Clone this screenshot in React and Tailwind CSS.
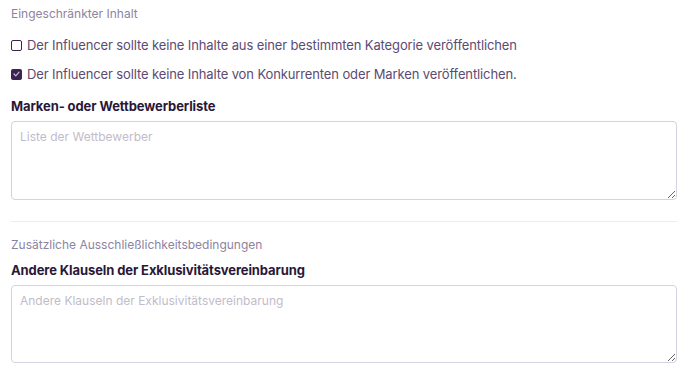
export default function App() {
  return (
    <div className="bg-white w-[688px] h-[374px] px-[11px] pt-[6px] font-['Inter',sans-serif] text-[#5b4b73]">
      <p className="text-[12px] leading-[16px] text-[#8d83a0]">Eingeschränkter Inhalt</p>

      <label className="mt-[14px] flex items-center gap-[5px] text-[13px] leading-[18px] tracking-[-0.12px]">
        <span className="w-[11px] h-[11px] rounded-[2px] border-[1.5px] border-[#3b2451] bg-white shrink-0" />
        <span>Der Influencer sollte keine Inhalte aus einer bestimmten Kategorie veröffentlichen</span>
      </label>

      <label className="mt-[11px] flex items-center gap-[5px] text-[13px] leading-[18px] tracking-[-0.12px]">
        <span className="w-[11px] h-[11px] rounded-[2px] bg-[#3b2451] shrink-0 flex items-center justify-center">
          <svg width="7" height="6" viewBox="0 0 7 6" fill="none">
            <path d="M1 3l1.8 1.8L6 1.2" stroke="#c9bed6" strokeWidth="1.2" strokeLinecap="round" strokeLinejoin="round" />
          </svg>
        </span>
        <span>Der Influencer sollte keine Inhalte von Konkurrenten oder Marken veröffentlichen.</span>
      </label>

      <h3 className="mt-[14px] text-[13px] leading-[18px] font-bold tracking-[-0.1px] text-[#2a1838]">Marken- oder Wettbewerberliste</h3>
      <textarea
        placeholder="Liste der Wettbewerber"
        className="mt-[6px] block w-full h-[79px] rounded-[4px] border border-[#d6d1de] px-[8px] py-[7px] text-[12px] leading-[16px] placeholder:text-[#c2bcca] outline-none"
      />

      <div className="mt-[21px] h-px bg-[#ececf0]" />

      <p className="mt-[15px] text-[12px] leading-[16px] text-[#8d83a0]">Zusätzliche Ausschließlichkeitsbedingungen</p>
      <h3 className="mt-[8px] text-[13px] leading-[18px] font-bold tracking-[-0.1px] text-[#2a1838]">Andere Klauseln der Exklusivitätsvereinbarung</h3>
      <textarea
        placeholder="Andere Klauseln der Exklusivitätsvereinbarung"
        className="mt-[6px] block w-full h-[78px] rounded-[4px] border border-[#d6d1de] px-[8px] py-[7px] text-[12px] leading-[16px] placeholder:text-[#c2bcca] outline-none"
      />
    </div>
  );
}
